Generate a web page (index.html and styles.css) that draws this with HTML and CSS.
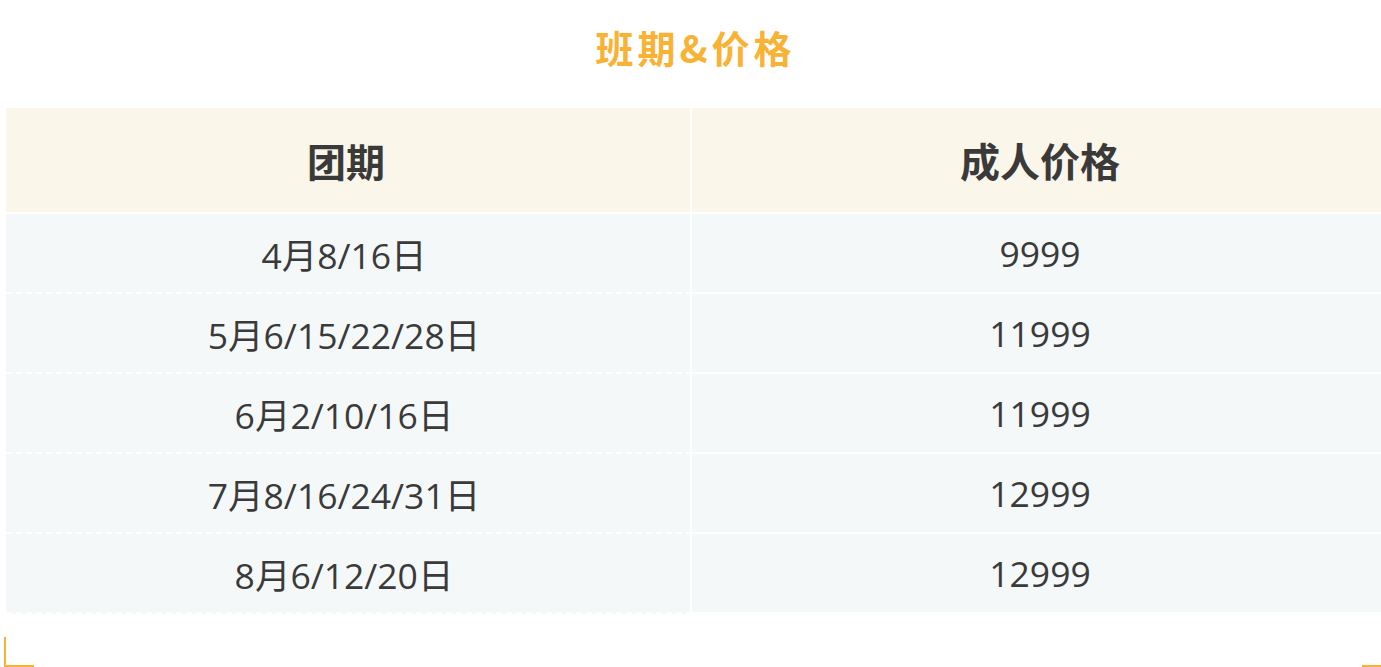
FILE: index.html
```html
<!DOCTYPE html>
<html lang="zh-CN">
<head>
<meta charset="utf-8">
<title>班期&amp;价格</title>
<link rel="stylesheet" href="styles.css">
</head>
<body>
<div class="page">
  <h1 class="title">班期&amp;价格</h1>
  <div class="price-table">
    <div class="cell head left">团期</div>
    <div class="cell head">成人价格</div>
    <div class="cell date left">4月8/16日</div>
    <div class="cell price">9999</div>
    <div class="cell date left">5月6/15/22/28日</div>
    <div class="cell price">11999</div>
    <div class="cell date left">6月2/10/16日</div>
    <div class="cell price">11999</div>
    <div class="cell date left">7月8/16/24/31日</div>
    <div class="cell price">12999</div>
    <div class="cell date left">8月6/12/20日</div>
    <div class="cell price">12999</div>
  </div>
  <div class="corners">
    <span class="corner-left"></span>
    <span class="corner-right"></span>
  </div>
</div>
</body>
</html>
```
FILE: styles.css
```css
html, body {
  margin: 0;
  padding: 0;
  background: #ffffff;
  overflow: hidden;
}

.page {
  width: 1381px;
  font-family: "Open Sans", "Noto Sans", "Noto Sans CJK SC", sans-serif;
  color: #3a3a3a;
}

.title {
  margin: 0;
  padding-top: 23px;
  padding-left: 10px;
  height: 48px;
  line-height: 48px;
  margin-bottom: 37px;
  text-align: center;
  font-family: "Noto Sans CJK SC", sans-serif;
  font-size: 38px;
  font-weight: 700;
  letter-spacing: 4px;
  color: #f8b234;
}

.price-table {
  margin-left: 6px;
  display: grid;
  grid-template-columns: 684px 696px;
  column-gap: 2px;
  background: #ffffff;
}

.cell {
  display: flex;
  align-items: center;
  justify-content: center;
}

.left {
  padding-right: 8px;
}

.head {
  height: 104px;
  margin-bottom: 2px;
  background: #faf6ea;
  font-family: "Noto Sans CJK SC", sans-serif;
  font-size: 40px;
  font-weight: 700;
  color: #3a3a3a;
}

.head.left {
  padding-right: 4px;
  font-size: 39px;
}

.date,
.price {
  height: 78px;
  padding-bottom: 2px;
  font-size: 35.5px;
  background-color: #f4f8f9;
}

.date {
  background-image: repeating-linear-gradient(to right, #ffffff 0 6px, transparent 6px 10px);
  background-repeat: no-repeat;
  background-size: 100% 2px;
  background-position: left bottom;
}

.price {
  background-image: linear-gradient(#ffffff, #ffffff);
  background-repeat: no-repeat;
  background-size: 100% 2px;
  background-position: left bottom;
}

.corners {
  margin-top: 23px;
  display: flex;
  justify-content: space-between;
  align-items: flex-end;
  padding-left: 4px;
}

.corner-left {
  display: block;
  width: 28px;
  height: 28px;
  border-left: 2px solid #f8b234;
  border-bottom: 2px solid #f8b234;
}

.corner-right {
  display: block;
  width: 19px;
  height: 0;
  border-bottom: 2px solid #f8b234;
}
```
